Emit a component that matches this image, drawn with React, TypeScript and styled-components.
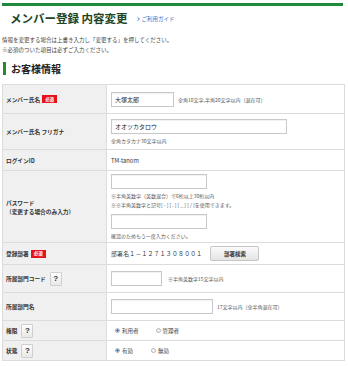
import styled, { createGlobalStyle } from "styled-components";

const GlobalStyle = createGlobalStyle`
  html, body {
    margin: 0;
    padding: 0;
    background: #fff;
  }
  body {
    font-family: "Noto Sans CJK JP", "Noto Sans", sans-serif;
    color: #333;
  }
`;

const Page = styled.div`
  width: 348px;
  padding: 3px 3px 0 2px;
  box-sizing: border-box;
`;

const TopBar = styled.div`
  height: 3px;
  margin-right: 2px;
  background: #1f8a3b;
`;

const Header = styled.div`
  display: flex;
  align-items: center;
  gap: 9px;
  height: 18px;
  margin-top: 3px;
  padding-left: 8px;
`;

const Title = styled.h1`
  margin: 0;
  font-size: 11.5px;
  line-height: 18px;
  font-weight: bold;
  color: #1c4425;
`;

const GuideLink = styled.a`
  display: flex;
  align-items: center;
  gap: 2px;
  font-size: 5.5px;
  color: #3a6fc4;
  text-decoration: none;
  margin-top: 1px;
`;

const Intro = styled.p`
  margin: 8px 0 0;
  font-size: 5.5px;
  line-height: 10px;
  color: #444;
`;

const SectionHeading = styled.h2`
  display: flex;
  align-items: center;
  height: 13px;
  margin: 7px 0 0 1px;
  padding-left: 5px;
  border-left: 3px solid #2b8a2b;
  font-size: 10px;
  font-weight: bold;
  color: #222;
`;

const Table = styled.table`
  width: 343px;
  margin-top: 9px;
  border-collapse: collapse;
  border: 1px solid #dcdcdc;
`;

const Row = styled.tr<{ $h: number }>`
  height: ${(p) => p.$h}px;
  border-bottom: 1px solid #dcdcdc;
`;

const Label = styled.th`
  width: 97px;
  padding: 0 3px;
  background: #f0f0f0;
  border-right: 1px solid #dcdcdc;
  text-align: left;
  vertical-align: middle;
  font-size: 5.7px;
  line-height: 9px;
  font-weight: bold;
  color: #333;
`;

const LabelInner = styled.div`
  display: flex;
  align-items: center;
  gap: 2px;
`;

const Cell = styled.td`
  padding: 0 4px;
  vertical-align: middle;
  font-size: 5.5px;
  color: #333;
`;

const Line = styled.div`
  display: flex;
  align-items: center;
`;

const Stack = styled.div`
  display: flex;
  flex-direction: column;
  align-items: flex-start;
`;

const Required = styled.span`
  display: inline-flex;
  align-items: center;
  justify-content: center;
  width: 15px;
  height: 8px;
  background: #e6121a;
  color: #fff;
  font-size: 4.5px;
  font-weight: bold;
`;

const Help = styled.span`
  display: inline-flex;
  align-items: center;
  justify-content: center;
  width: 10px;
  height: 12px;
  margin-left: 2px;
  border: 1px solid #cfcfcf;
  border-radius: 1px;
  background: linear-gradient(#fdfdfd, #e9e9e9);
  font-family: "Liberation Sans", Arial, sans-serif;
  font-size: 8px;
  font-weight: bold;
  color: #333;
`;

const Input = styled.div<{ $w: number; $top?: number }>`
  width: ${(p) => p.$w}px;
  height: 15px;
  margin-top: ${(p) => p.$top ?? 0}px;
  box-sizing: border-box;
  border: 1px solid #c8c8c8;
  box-shadow: inset 0 1px 1px rgba(0, 0, 0, 0.06);
  background: #fff;
  padding-left: 3px;
  display: flex;
  align-items: center;
  font-size: 6px;
  color: #222;
`;

const Hint = styled.span<{ $gap?: number }>`
  margin-left: ${(p) => p.$gap ?? 4}px;
  font-size: 5px;
  line-height: 9px;
  color: #555;
`;

const SubHint = styled.div`
  margin-top: 2px;
  font-size: 5px;
  line-height: 9px;
  color: #555;
`;

const Plain = styled.span`
  font-size: 5.8px;
  color: #333;
`;

const Dept = styled.span`
  font-size: 5.8px;
  color: #333;
  letter-spacing: 0.3px;
`;

const Button = styled.button`
  width: 49px;
  height: 15px;
  margin-left: 8px;
  padding: 0;
  border: 1px solid #c6c6c6;
  border-radius: 2px;
  background: linear-gradient(#fbfbfb, #e4e4e4);
  font-family: inherit;
  font-size: 5.5px;
  font-weight: bold;
  color: #333;
`;

const RadioGroup = styled.div`
  display: flex;
  align-items: center;
`;

const RadioItem = styled.label<{ $gap: number }>`
  display: inline-flex;
  align-items: center;
  gap: 2px;
  margin-left: ${(p) => p.$gap}px;
  font-size: 5.5px;
  color: #444;
`;

const Dot = styled.span<{ $on?: boolean }>`
  width: 5px;
  height: 5px;
  box-sizing: border-box;
  border-radius: 50%;
  border: 1px solid #b5b5b5;
  background: ${(p) =>
    p.$on ? "radial-gradient(circle, #2f6fd0 0 45%, #dbe6f5 55%)" : "#f6f6f6"};
`;

const Chevron = () => (
  <svg width="3" height="4" viewBox="0 0 3 4">
    <path d="M0.5 0.3 L2.4 2 L0.5 3.7" fill="none" stroke="#3a6fc4" strokeWidth="0.9" />
  </svg>
);

export default function App() {
  return (
    <>
      <GlobalStyle />
      <Page>
        <TopBar />
        <Header>
          <Title>メンバー登録 内容変更</Title>
          <GuideLink href="#">
            <Chevron />
            ご利用ガイド
          </GuideLink>
        </Header>
        <Intro>
          情報を変更する場合は上書き入力し「変更する」を押してください。
          <br />
          ※必須のついた項目は必ずご入力ください。
        </Intro>
        <SectionHeading>お客様情報</SectionHeading>
        <Table>
          <tbody>
            <Row $h={29}>
              <Label>
                <LabelInner>
                  メンバー氏名 <Required>必須</Required>
                </LabelInner>
              </Label>
              <Cell>
                <Line>
                  <Input $w={63}>大塚太郎</Input>
                  <Hint>全角10文字,半角20文字以内（混在可）</Hint>
                </Line>
              </Cell>
            </Row>
            <Row $h={36}>
              <Label>メンバー氏名 フリガナ</Label>
              <Cell>
                <Stack>
                  <Input $w={176}>オオツカタロウ</Input>
                  <SubHint>全角カタカナ30文字以内</SubHint>
                </Stack>
              </Cell>
            </Row>
            <Row $h={21}>
              <Label>ログインID</Label>
              <Cell>
                <Plain>TM-tanom</Plain>
              </Cell>
            </Row>
            <Row $h={72}>
              <Label>
                パスワード
                <br />
                （変更する場合のみ入力）
              </Label>
              <Cell>
                <Stack>
                  <Input $w={96} />
                  <SubHint>
                    ※半角英数字（英数混合）で6桁以上30桁以内
                    <br />
                    ※※半角英数字と記号[ - ] [ . ] [ _ ] [ / ]を使用できます。
                  </SubHint>
                  <Input $w={96} $top={5} />
                  <SubHint>確認のためもう一度入力ください。</SubHint>
                </Stack>
              </Cell>
            </Row>
            <Row $h={22}>
              <Label>
                <LabelInner>
                  登録部署 <Required>必須</Required>
                </LabelInner>
              </Label>
              <Cell>
                <Line>
                  <Dept>部署名１－１２７１３０８００１</Dept>
                  <Button type="button">部署検索</Button>
                </Line>
              </Cell>
            </Row>
            <Row $h={28}>
              <Label>
                <LabelInner>
                  所属部門コード <Help>?</Help>
                </LabelInner>
              </Label>
              <Cell>
                <Line>
                  <Input $w={51} />
                  <Hint $gap={6}>※半角英数字15文字以内</Hint>
                </Line>
              </Cell>
            </Row>
            <Row $h={28}>
              <Label>所属部門名</Label>
              <Cell>
                <Line>
                  <Input $w={102} />
                  <Hint>17文字以内（全半角混在可）</Hint>
                </Line>
              </Cell>
            </Row>
            <Row $h={20}>
              <Label>
                <LabelInner>
                  権限 <Help>?</Help>
                </LabelInner>
              </Label>
              <Cell>
                <RadioGroup>
                  <RadioItem $gap={4}>
                    <Dot $on />
                    利用者
                  </RadioItem>
                  <RadioItem $gap={17}>
                    <Dot />
                    管理者
                  </RadioItem>
                </RadioGroup>
              </Cell>
            </Row>
            <Row $h={20}>
              <Label>
                <LabelInner>
                  状態 <Help>?</Help>
                </LabelInner>
              </Label>
              <Cell>
                <RadioGroup>
                  <RadioItem $gap={4}>
                    <Dot $on />
                    有効
                  </RadioItem>
                  <RadioItem $gap={18}>
                    <Dot />
                    無効
                  </RadioItem>
                </RadioGroup>
              </Cell>
            </Row>
          </tbody>
        </Table>
      </Page>
    </>
  );
}
